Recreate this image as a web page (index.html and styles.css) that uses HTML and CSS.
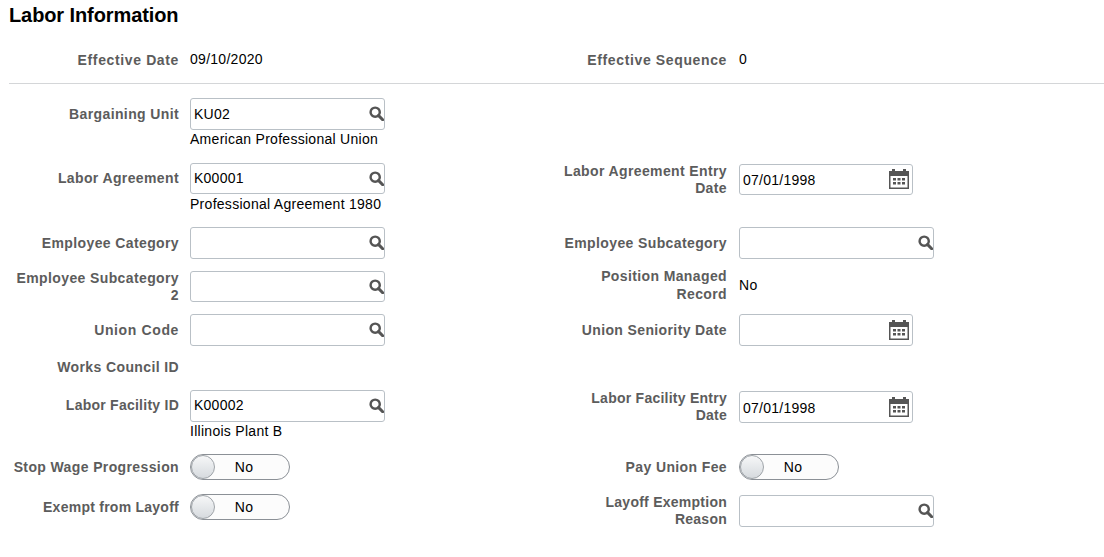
FILE: index.html
```html
<!DOCTYPE html>
<html lang="en">
<head>
<meta charset="utf-8">
<title>Labor Information</title>
<link rel="stylesheet" href="styles.css">
</head>
<body>
<svg class="defs" width="0" height="0" aria-hidden="true">
  <symbol id="search" viewBox="0 0 16 16">
    <circle cx="6.6" cy="6.6" r="4.9" fill="none" stroke="currentColor" stroke-width="2.6"/>
    <path d="M10.3 10.3 14.6 14.6" fill="none" stroke="currentColor" stroke-width="3.2" stroke-linecap="round"/>
  </symbol>
  <symbol id="calendar" viewBox="0 0 20 20">
    <path fill="currentColor" fill-rule="evenodd" d="M0 2h3V0h3v2h8V0h3v2h3v18H0zM1.500 7v11.500h17V7z"/>
    <path fill="currentColor" d="M4 9h3v2.500H4zM8.500 9h3v2.500h-3zM13 9h3v2.500h-3zM4 13h3v2.500H4zM8.500 13h3v2.500h-3zM13 13h3v2.500h-3z"/>
  </symbol>
</svg>
<main class="page">
  <h1 class="title">Labor Information</h1>
  <section class="row row-head">
    <div class="label label-wide">Effective Date</div>
    <div class="cell"><div class="value">09/10/2020</div></div>
    <div class="label label-wide">Effective Sequence</div>
    <div class="cell"><div class="value">0</div></div>
  </section>
  <hr class="rule">
  <section class="row row-desc">
    <label class="label">Bargaining Unit</label>
    <div class="cell">
      <div class="box box-wide"><input class="text" value="KU02"><svg class="ico-search"><use href="#search"/></svg></div>
      <div class="desc">American Professional Union</div>
    </div>
    <div></div><div></div>
  </section>
  <section class="row row-desc">
    <label class="label">Labor Agreement</label>
    <div class="cell">
      <div class="box box-wide"><input class="text" value="K00001"><svg class="ico-search"><use href="#search"/></svg></div>
      <div class="desc">Professional Agreement 1980</div>
    </div>
    <label class="label label-entry">Labor Agreement Entry Date</label>
    <div class="cell cell-entry">
      <div class="box box-date"><input class="text text-date" value="07/01/1998"><svg class="ico-cal"><use href="#calendar"/></svg></div>
    </div>
  </section>
  <section class="row">
    <label class="label">Employee Category</label>
    <div class="cell"><div class="box box-wide"><input class="text"><svg class="ico-search"><use href="#search"/></svg></div></div>
    <label class="label">Employee Subcategory</label>
    <div class="cell"><div class="box box-wide"><input class="text"><svg class="ico-search"><use href="#search"/></svg></div></div>
  </section>
  <section class="row">
    <label class="label">Employee Subcategory 2</label>
    <div class="cell"><div class="box box-wide"><input class="text"><svg class="ico-search"><use href="#search"/></svg></div></div>
    <div class="label label-loose">Position Managed Record</div>
    <div class="cell"><div class="value value-mid">No</div></div>
  </section>
  <section class="row row-short">
    <label class="label label-wide">Union Code</label>
    <div class="cell"><div class="box box-wide"><input class="text"><svg class="ico-search"><use href="#search"/></svg></div></div>
    <label class="label">Union Seniority Date</label>
    <div class="cell"><div class="box box-date"><input class="text"><svg class="ico-cal"><use href="#calendar"/></svg></div></div>
  </section>
  <section class="row row-tight">
    <div class="label">Works Council ID</div>
    <div class="cell"></div>
    <div></div><div></div>
  </section>
  <section class="row row-facility">
    <label class="label label-narrow label-up">Labor Facility ID</label>
    <div class="cell">
      <div class="box box-wide"><input class="text text-up" value="K00002"><svg class="ico-search"><use href="#search"/></svg></div>
      <div class="desc">Illinois Plant B</div>
    </div>
    <label class="label label-entry label-narrow">Labor Facility Entry Date</label>
    <div class="cell cell-entry">
      <div class="box box-date"><input class="text text-date" value="07/01/1998"><svg class="ico-cal"><use href="#calendar"/></svg></div>
    </div>
  </section>
  <section class="row row-toggle">
    <div class="label">Stop Wage Progression</div>
    <div class="cell"><div class="toggle"><span class="knob"></span><span class="toggle-text">No</span></div></div>
    <div class="label">Pay Union Fee</div>
    <div class="cell"><div class="toggle"><span class="knob"></span><span class="toggle-text">No</span></div></div>
  </section>
  <section class="row row-toggle">
    <div class="label label-narrow">Exempt from Layoff</div>
    <div class="cell"><div class="toggle"><span class="knob"></span><span class="toggle-text">No</span></div></div>
    <label class="label label-narrow drop">Layoff Exemption Reason</label>
    <div class="cell drop"><div class="box box-wide"><input class="text"><svg class="ico-search"><use href="#search"/></svg></div></div>
  </section>
</main>
</body>
</html>
```
FILE: styles.css
```css
* { box-sizing: border-box; }
html, body { margin: 0; padding: 0; background: #fff; }
body {
  width: 1104px;
  height: 557px;
  overflow: hidden;
  font-family: "Liberation Sans", Arial, sans-serif;
  font-size: 14px;
  letter-spacing: 0.28px;
  color: #000;
}
.defs { position: absolute; }
.page { padding: 0 0 0 9px; display: flex; flex-direction: column; }
.title {
  margin: 0;
  height: 44px;
  padding-top: 4px;
  font-size: 20px;
  line-height: 22px;
  font-weight: bold;
  letter-spacing: -0.1px;
  color: #000;
}
.row {
  display: grid;
  grid-template-columns: 170px 370px 178px 1fr;
  align-items: start;
  margin-bottom: 11.5px;
}
.row-head { margin-bottom: 7px; }
.row-desc { margin-bottom: 14.6px; }
.row-short { margin-bottom: 5px; }
.row-tight { margin-bottom: 7px; }
.row-facility { margin-bottom: 11px; }
.row-toggle { margin-bottom: 8px; }
.rule {
  margin: 0 0 14px;
  border: 0;
  height: 1px;
  background: #d4d6d8;
}
.label {
  height: 32px;
  display: flex;
  align-items: center;
  justify-content: flex-end;
  text-align: right;
  font-weight: bold;
  line-height: 17px;
  letter-spacing: 0.38px;
  color: #5c5c5c;
}
.label-wide { letter-spacing: 0.63px; }
.label-narrow { letter-spacing: 0.25px; }
.label-loose { line-height: 18px; padding-bottom: 3px; }
.label-entry { padding-top: 2px; }
.label-up { padding-bottom: 2px; }
.drop { margin-top: 4px; }
.cell { padding-left: 11px; }
.cell-entry { padding-top: 1px; }
.row > .label:nth-child(3) { padding-left: 9px; }
.row > .cell:nth-child(4) { padding-left: 12px; }
.value { min-height: 32px; display: flex; align-items: center; padding-bottom: 3px; }
.value-mid { padding-bottom: 4px; }
.box {
  height: 31.6px;
  display: flex;
  align-items: center;
  background: #fff;
  border: 1px solid #b9c0c6;
  border-radius: 3px;
}
.box-wide { width: 195px; }
.box-date { width: 174px; }
.text {
  flex: 1;
  min-width: 0;
  height: 100%;
  padding: 0 0 0 3px;
  border: 0;
  outline: 0;
  background: transparent;
  font: 14px "Liberation Sans", Arial, sans-serif;
  letter-spacing: 0.25px;
  color: #000;
}
.text-date { padding-top: 2px; }
.text-up { padding-bottom: 2px; }
.ico-search { width: 15px; height: 15px; flex: none; color: #555; }
.ico-cal { width: 20px; height: 20px; flex: none; color: #555; margin-right: 3px; }
.desc { line-height: 17px; height: 17px; margin-top: 1.4px; }
.toggle {
  position: relative;
  width: 100px;
  height: 26px;
  margin-top: 3px;
  border: 1px solid #8b9096;
  border-radius: 13px;
  background: #fcfcfc;
  display: flex;
  align-items: center;
}
.knob {
  position: absolute;
  left: 0;
  top: 0;
  width: 24px;
  height: 24px;
  border-radius: 50%;
  border: 1px solid #9ea3a8;
  background: linear-gradient(#f6f7f8, #d6dade);
}
.toggle-text { width: 100%; padding-left: 8px; text-align: center; }
```
